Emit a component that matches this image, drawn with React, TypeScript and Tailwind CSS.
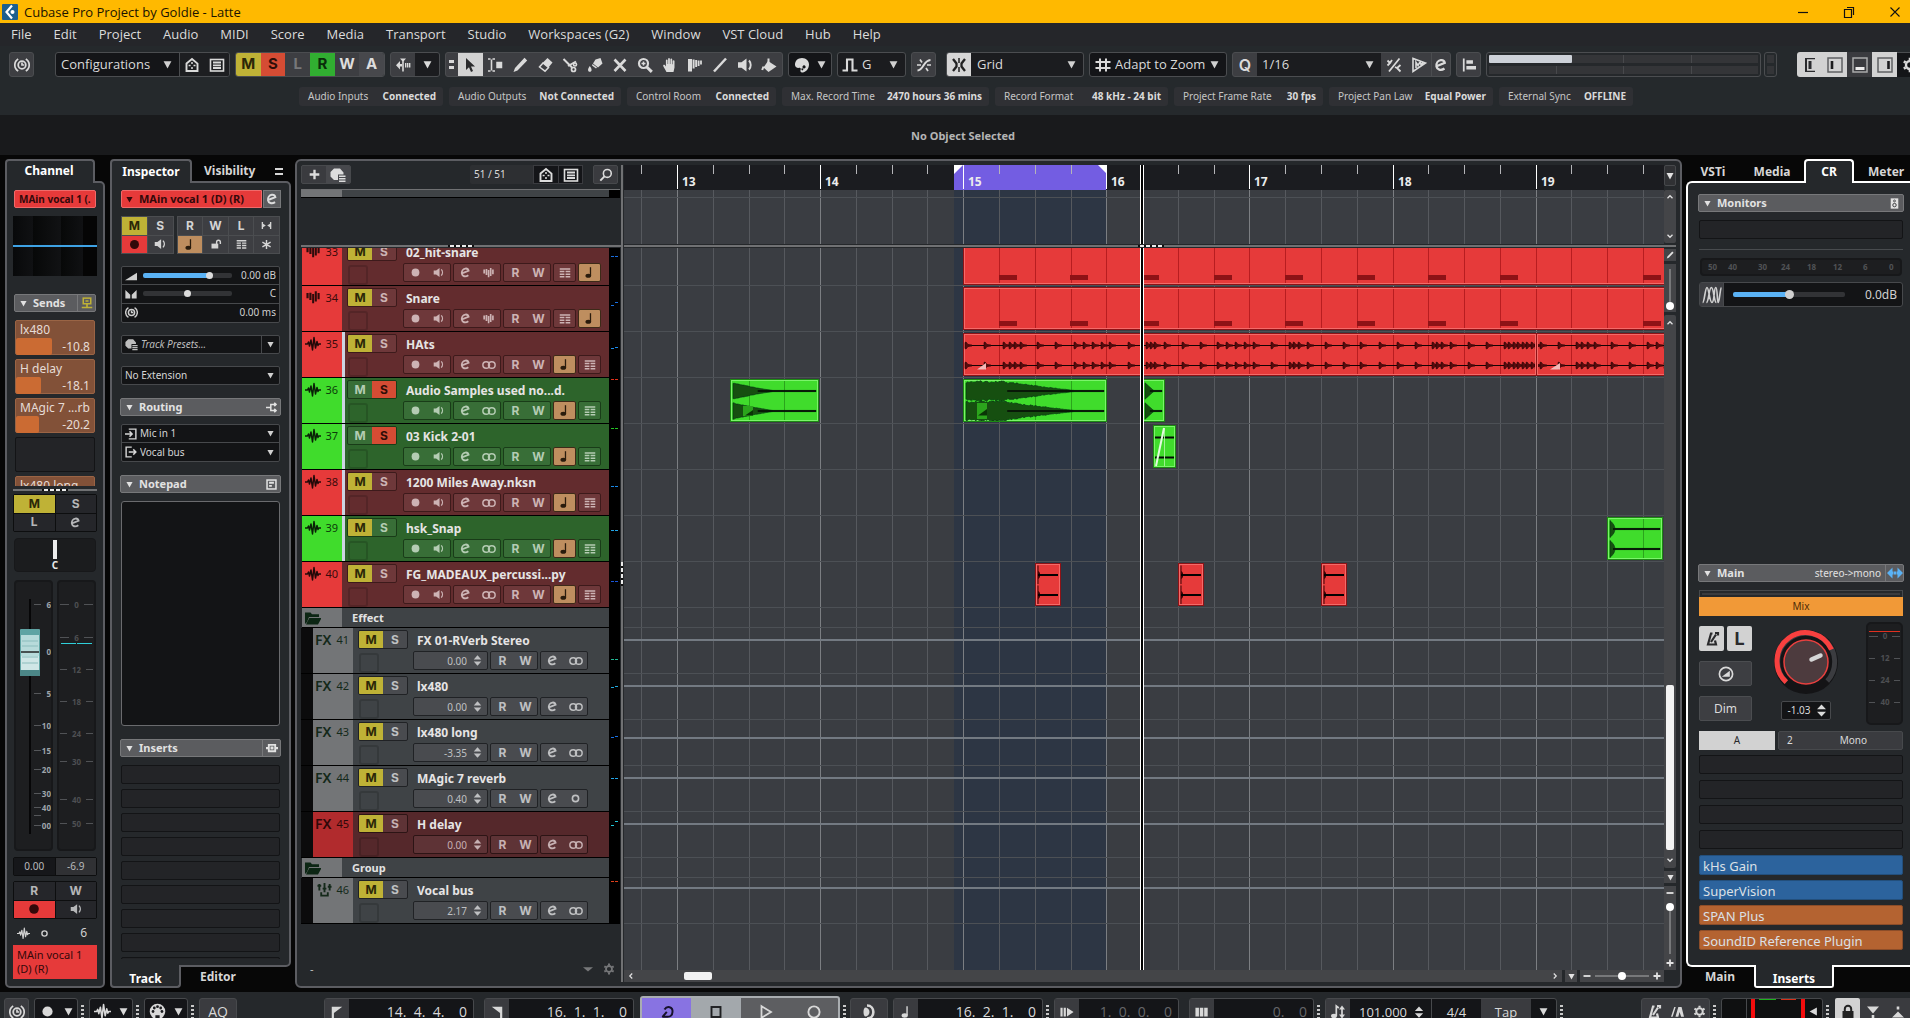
import React from "react";

/* ---------- icons ---------- */

const S = { fill: "none", stroke: "currentColor", strokeWidth: 1.5 } as const;

const glyphs: Record<string, React.ReactNode> = {
  clock: (
    <g {...S}>
      <circle cx="8" cy="8" r="3.8" strokeWidth="1.8" />
      <path d="M8 5.5V8h2.2M4.2 2a7 7 0 0 0 0 12M11.8 2a7 7 0 0 1 0 12" strokeWidth="1.7" />
    </g>
  ),
  house: (
    <g {...S}>
      <path d="M2.500 6.600 8 2l5.500 4.600V14h-11z" strokeWidth="1.900" />
      <path d="M8 5v2M8 10v2M4.600 8.600h2M9.500 8.600h2" />
    </g>
  ),
  list: (
    <g {...S}>
      <rect x="1.500" y="2.500" width="13" height="11.500" strokeWidth="1.600" />
      <path d="M4 5.500h8M4 8.300h8M4 11h8" strokeWidth="1.800" />
    </g>
  ),
  autoscroll: (
    <g fill="currentColor">
      <path d="M1 8.2 5 4v8.400zM4 7h3v2.400H4zM5 1.500h6L8 5zM7.200 3h1.600v11.500H7.200zM10 6h1.400v4.500H10zM12 6h1.400v4.500H12zM14 6h1.400v4.500H14z" />
    </g>
  ),
  pointer: <path fill="currentColor" d="M4 1v12l3-2.800L9 15l2-.9-2-4.500h4z" />,
  range: (
    <g {...S}>
      <path d="M1 2h2.500M5.500 2H8M4.500 2.500v11M1 14h2.500M5.500 14H8" strokeWidth="1.600" />
      <rect x="10" y="5.500" width="4.500" height="5" fill="currentColor" />
    </g>
  ),
  pencil: <path fill="currentColor" d="M12.500.8l2.700 2.700L5.500 13.500 1.500 15 3 11z" />,
  eraser: (
    <g>
      <path fill="currentColor" d="M10.500 1 15.500 5.500l-4 5L5.500 6z" />
      <path {...S} d="M6 6l5.500 4.500L8 14.200 2.500 10z" />
    </g>
  ),
  scissors: (
    <g {...S}>
      <path d="M1.500 2 10.500 11M14 4.500 6 9" strokeWidth="2" />
      <circle cx="11.500" cy="12.500" r="2" strokeWidth="1.700" />
      <circle cx="13" cy="7.500" r="1.500" strokeWidth="1.700" />
    </g>
  ),
  glue: (
    <g fill="currentColor">
      <path d="M8.500 2.500 13.500 1l2 5.500-4.500 4L6 6.500zM5.500 7l4.500 3.500-1 1-4-3z" />
      <path d="M2.800 9c2.600 3.200 2.200 5.800 0 5.800s-2.500-2.600 0-5.800z" />
    </g>
  ),
  x: <path d="M2.500 2.500 13.500 14M13.500 2.500 2.500 14" fill="none" stroke="currentColor" strokeWidth="2.600" />,
  zoom: (
    <g {...S}>
      <circle cx="6.500" cy="6.500" r="4.500" strokeWidth="2.200" />
      <path d="M9.800 10l5 4.800" strokeWidth="3" />
      <path d="M4.500 6.500h4M6.500 4.500v4" strokeWidth="1.500" />
    </g>
  ),
  hand: (
    <path
      fill="currentColor"
      d="M4.500 15 1.300 9.200c-.6-1.400.9-2 1.700-1l.9 1.200V3.300c0-1.100 1.700-1.100 1.700 0V7h.5V1.900c0-1.100 1.800-1.100 1.800 0V7h.5V2.200c0-1.100 1.800-1.100 1.800 0V7.300h.5V4c0-1.100 1.800-1.100 1.800 0v6.500L11.500 15z"
    />
  ),
  comb: <path fill="currentColor" d="M1 2h4v12.500H1zM5.600 2.500h2v9h-2zM8.200 3h1.900v7H8.200zM10.700 3.500h1.800v5.500h-1.800zM13.100 3.500h1.800v4h-1.800z" />,
  line: <path d="M2 14.500 14 1.500" fill="none" stroke="currentColor" strokeWidth="2.500" />,
  speaker: (
    <g>
      <path fill="currentColor" d="M1 5.200h3.500L9.500 1.500v13L4.500 10.800H1z" />
      <path {...S} d="M12 3.500c2.300 2.500 2.300 6.500 0 9" strokeWidth="1.900" />
    </g>
  ),
  paint: (
    <g>
      <path fill="currentColor" d="M7 4l8.500 5.500L7.500 15 2.500 10.500z" />
      <path {...S} d="M7.500 6V1.500M2.500 9.500l-1.300 3.500" strokeWidth="2" />
    </g>
  ),
  palette: (
    <path
      fill="currentColor"
      fillRule="evenodd"
      d="M8 1c4.400 0 7 3 7 6.500S12.500 15 8.500 15.500c-2 .2-2.500-1.500-1.800-3 .6-1.300-.8-1.800-2.200-1.600C2 11.200 1 9 1 7.500 1 3.800 4 1 8 1zM10 8.300a1.600 1.600 0 1 0 .1 0zM8.300 11.300a1 1 0 1 0 .1 0z"
    />
  ),
  pulse: <path {...S} d="M.5 13.500H5V2.500h5.500v11h5" strokeWidth="2.100" />,
  xfade: (
    <g {...S}>
      <path d="M1.500 13.500C8 13 7 3.500 14.500 3" strokeWidth="2" />
      <path d="M1 8h4M11 8h4M10 11l2 3M4 2.500l2 3" strokeWidth="1.700" />
    </g>
  ),
  snap: (
    <g {...S}>
      <path d="M8 1v5M8 10v5" strokeWidth="1.500" />
      <path d="M2 2l3.500 4.500v3L2 14M14 2l-3.500 4.500v3L14 14" strokeWidth="2.300" />
    </g>
  ),
  hash: <path {...S} d="M5 1.500v13M11 1.500v13M.5 5h15M.5 11h15" strokeWidth="2" />,
  swing: <path {...S} d="M13.500 1.500 3 14.500M1.500 3.500 4 6l-2.500 2.500M4 6l2-3M14.500 8 11 11l3.500 3.500M11 11l-2-1" strokeWidth="1.800" />,
  tri: <path {...S} d="M2 14.500V1.500L14.500 6zM5 11V5.500l2 3 2-3.500 1 2.500 2-1.500" strokeWidth="1.600" />,
  align: <path fill="currentColor" d="M1 .5h2v15H1zM5 2.500h7.500v4H5zM5 9h11v4H5z" />,
  e: <path d="M3.500 9.200l8.300-3.300C11.300 3.800 9.500 2.900 7.700 3.200 4.800 3.700 3 6.500 3.500 9.500c.5 3 4.200 4.600 8 2" fill="none" stroke="currentColor" strokeWidth="2.300" />,
  dot: <circle cx="8" cy="8" r="4.800" fill="currentColor" />,
  ring: <circle cx="8" cy="8" r="3.800" fill="none" stroke="currentColor" strokeWidth="2" />,
  rings: (
    <g fill="none" stroke="currentColor" strokeWidth="1.700">
      <circle cx="4.800" cy="8" r="3.800" />
      <circle cx="11.200" cy="8" r="3.800" />
    </g>
  ),
  note: (
    <g>
      <ellipse cx="6.500" cy="12" rx="3.500" ry="2.500" fill="currentColor" />
      <path d="M9.200 12V1.500" stroke="currentColor" strokeWidth="1.600" />
    </g>
  ),
  lanes: <path {...S} d="M1 2.500h14M1 6h6.200M8.800 6H15M1 9.500h6.200M8.800 9.500H15M1 13h6.200M8.800 13H15" strokeWidth="2" />,
  bars: <path fill="currentColor" d="M.5 3.500H3v6H.5zM3.800 3h2.500v8.500H3.800zM7 4.500h2.300V15H7zM10 1.500h2.400V13H10zM13.200 3.500h2.400v7h-2.400z" />,
  wave: <path fill="none" stroke="currentColor" strokeWidth="1.500" strokeLinejoin="round" d="M0 8h2.500l1-2 1 4 1.500-6 1.500 10L9 1.500l1.500 10.500L12 5.500l1 4 .8-1.500H16" />,
  lock: (
    <g>
      <rect x="2" y="7.500" width="9" height="6.500" fill="currentColor" />
      <path {...S} d="M8.800 8V5.500a2.500 2.500 0 0 1 5 0V8" strokeWidth="1.900" />
    </g>
  ),
  locked: (
    <g>
      <rect x="2.500" y="7" width="11" height="8" fill="currentColor" />
      <path {...S} d="M4.800 8V5a3.200 3.200 0 0 1 6.400 0v3" strokeWidth="2" />
    </g>
  ),
  bow: <path fill="currentColor" d="M1 3h2v2.500L7 8l-4 2.500V13H1zM15 3h-2v2.500L9 8l4 2.500V13h2z" />,
  star: <path {...S} d="M8 1.500v13M2 4.500l12 7M14 4.500l-12 7" strokeWidth="2.100" />,
  vol: <path fill="currentColor" d="M0 13.500 16 3.500v10z" />,
  pan: <path fill="currentColor" d="M.5 2.500 7 9v5H.5zM15.500 2.500 9 9v5h6.500z" />,
  preset: (
    <g fill="currentColor">
      <path d="M4 1.500h6l3.500 4v2H8V13H4L.5 9.500V5z" />
      <path d="M9 8.500h6.500V10H9zM9 11h6.500v1.500H9zM9 13.500h6.500V15H9z" />
    </g>
  ),
  routing: <path {...S} d="M0 8h6M14.500 3.500H7v9h7.500M12 1l2.500 2.500L12 6M12 10l2.500 2.500L12 15" strokeWidth="2.200" />,
  pad: (
    <g {...S}>
      <rect x="1.500" y="1.500" width="13" height="13" strokeWidth="2.200" />
      <path d="M4.500 5.500h7M4.500 10h4" strokeWidth="2.800" />
    </g>
  ),
  ins: (
    <g fill="currentColor">
      <path fillRule="evenodd" d="M2.500 2.500h11v11h-11zM5 5v6h6V5zM6 6h4v4H6z" />
      <path d="M0 6.500h3v3H0zM13 6.500h3v3h-3z" />
    </g>
  ),
  net: (
    <g {...S}>
      <rect x="3" y="1.500" width="10" height="7.500" strokeWidth="2" />
      <path d="M6 5.300h4M8 9v4.500M1 14h14" strokeWidth="2.200" />
    </g>
  ),
  inp: <path {...S} d="M5 1.500h9.500v13H5M0 8h9M6 4.500 9.500 8 6 11.500" strokeWidth="1.900" />,
  out: <path {...S} d="M9 1.500H1.500v13H9M5 8h9.500M11 4.500 14.500 8 11 11.500" strokeWidth="1.900" />,
  search: (
    <g {...S}>
      <circle cx="9.500" cy="6.200" r="4.500" strokeWidth="1.800" />
      <path d="M6.500 9.300 1.500 14.500" strokeWidth="2.200" />
    </g>
  ),
  plus: <path {...S} d="M8 1v14M1 8h14" strokeWidth="3.400" />,
  plusS: <path {...S} d="M8 1v14M1 8h14" strokeWidth="3.600" />,
  minus: <path {...S} d="M1 8h14" strokeWidth="3.600" />,
  folder: <path fill="currentColor" d="M0 2.500h5.500L7 4.200h7V7H4L2 12l-2 2zM4.300 8H16.500L13 14.500H1z" />,
  group: <path {...S} d="M2.500 2v7M8 1v10M13.500 2v7M4.500 11v3.500h7V11M.5 4h4M6 7h4M11.500 5h4" strokeWidth="2" />,
  gear: (
    <g {...S}>
      <circle cx="8" cy="8" r="4" strokeWidth="2.400" />
      <path d="M8 .8V3M8 13v2.200M1.800 4.400l1.900 1.100M12.300 10.500l1.900 1.100M1.800 11.600l1.900-1.100M12.300 5.500l1.900-1.100" strokeWidth="2.600" />
    </g>
  ),
  up: <path {...S} d="M3 10.500 8 5.500l5 5" strokeWidth="2.600" />,
  down: <path {...S} d="M3 5.500l5 5 5-5" strokeWidth="2.600" />,
  left: <path {...S} d="M10.500 3 5.500 8l5 5" strokeWidth="2.400" />,
  right: <path {...S} d="M5.500 3l5 5-5 5" strokeWidth="2.400" />,
  caret: <path fill="currentColor" d="M1 2h14L8 15z" />,
  caretW: <path fill="currentColor" d="M0 5h16l-8 7z" />,
  caretL: <path fill="currentColor" d="M14 1v14L1 8z" />,
  spin: <path fill="currentColor" d="M2.500 6.500 8 .5l5.500 6zM2.500 9.500h11L8 15.500z" />,
  monitor: (
    <g>
      <rect x="2.500" y=".5" width="11" height="15" fill="currentColor" />
      <circle cx="8" cy="10.300" r="2.500" fill="none" stroke="#3a3b3e" strokeWidth="1.400" />
      <circle cx="8" cy="4.300" r="1.400" fill="none" stroke="#3a3b3e" strokeWidth="1.200" />
    </g>
  ),
  stereo: <path fill="currentColor" d="M0 8l5.500-5.500v4h1v3h-1v4zM16 8l-5.500-5.500v4h-1v3h1v4zM7 6.500h2v3H7z" />,
  osc: <path {...S} d="M.5 14C2 14 2.500 2 4 2s2 12 4 12S9.500 2 11 2s1 12 2 12 1.500-12 2.500-12M3.500 14C5.500 14 5.500 2 7.500 2s2 12 4 12" strokeWidth="1.300" />,
  metro: <path fill="none" stroke="currentColor" strokeWidth="2.200" d="M8.500 2.500h-1.500L4 13.500h8L11 9.500M7 11l5-7.500M11 2h3v2.500" />,
  precount: <path fill="currentColor" d="M0 14.500 4 2.500h1.800L2 14.500zM5.500 14.500l3.500-12h4l3 12h-3.500l-2-6-1.500 6z" />,
  mixvol: (
    <g>
      <circle cx="8" cy="8" r="6.600" fill="none" stroke="currentColor" strokeWidth="1.700" />
      <path fill="currentColor" d="M3.800 10.800 11.800 4.800v6z" />
    </g>
  ),
  cycle: <path fill="none" stroke="currentColor" strokeWidth="2" strokeLinejoin="bevel" d="M5.500 5.500C8 1.500 14 2.500 13.500 8c-.3 3.500-2.500 4.800-5 4.800H3.500L7.800 7.800" />,
  stop: <rect x="3.500" y="3" width="9" height="10" fill="none" stroke="currentColor" strokeWidth="1.900" />,
  play: <path fill="none" stroke="currentColor" strokeWidth="1.800" d="M3.500 2.200v11.600L13 8z" />,
  rec: <circle cx="8" cy="8" r="5.600" fill="none" stroke="currentColor" strokeWidth="1.900" />,
  punch: (
    <g>
      <path fill="currentColor" d="M4 3.500a4.500 4.500 0 0 1 0 9C2 11 2 5 4 3.500z" />
      <path {...S} d="M6 1.500c8.500 0 8.500 13 0 13" strokeWidth="2.600" />
    </g>
  ),
  flagL: <path fill="currentColor" d="M2 2h12L4.500 9v6H2z" />,
  flagR: <path fill="currentColor" d="M14 2H2l9.500 7v6H14z" />,
  pre: <path fill="currentColor" d="M.5 3h2.500v10H.5zM4.200 3h2.500v10H4.200zM8 3l7.500 5L8 13z" />,
  post: <path fill="currentColor" d="M.5 3h4v10h-4zM5.500 3h4v10h-4zM10.500 3h4v10h-4z" />,
  tempo: (
    <g>
      <ellipse cx="4" cy="12" rx="3" ry="2.200" fill="currentColor" />
      <path d="M6.300 12V2l2.500 2M12 4v8" stroke="currentColor" strokeWidth="1.700" fill="none" />
      <path fill="currentColor" d="M9 5.500 12 1.500l3 4zM9 10.500 12 14.500l3-4z" />
    </g>
  ),
  midi: (
    <g>
      <circle cx="8" cy="8" r="7.300" fill="currentColor" />
      <g fill="#1b1c1f">
        <circle cx="3.800" cy="8" r="1.300" />
        <circle cx="5" cy="4.700" r="1.300" />
        <circle cx="8" cy="3.500" r="1.300" />
        <circle cx="11" cy="4.700" r="1.300" />
        <circle cx="12.200" cy="8" r="1.300" />
        <path d="M6 11.500h4V15H6z" />
      </g>
    </g>
  ),
  panelL: <path fill="#2a2b2e" d="M3 1h10v1.300H5v11.400h8V15H3zM6.500 4h3v8h-3z" />,
  panelLf: (
    <g fill="none" stroke="#5f6063" strokeWidth="1.500">
      <rect x="1" y="1" width="14" height="14" />
      <path d="M5 4v8" stroke="#1c1c1e" strokeWidth="2.600" />
    </g>
  ),
  panelB: (
    <g fill="none" stroke="#a9aaab" strokeWidth="1.500">
      <rect x="1" y="1" width="14" height="14" />
      <path d="M3.500 11.500h9" stroke="#ececec" strokeWidth="2.800" />
    </g>
  ),
  panelR: (
    <g fill="none" stroke="#5f6063" strokeWidth="1.500">
      <rect x="1" y="1" width="14" height="14" />
      <path d="M11.500 4v8" stroke="#1c1c1e" strokeWidth="2.600" />
    </g>
  ),
  mute1: <path fill="currentColor" d="M2 2.500h12L8 9.500zM6.700 11h2.600v3H6.700z" />,
  mute2: <path fill="currentColor" d="M2 13.500h12L8 7.500zM6.700 2.500h2.600v3H6.700z" />,
};

const Icon = ({ n, c = "size-4" }: { n: string; c?: string }) => (
  <svg viewBox="0 0 16 16" className={`shrink-0 ${c}`} aria-hidden="true">
    {glyphs[n]}
  </svg>
);

/* ---------- shared pieces ---------- */

const Btn = ({ n, w = "w-[25px]", label, c = "", ic }: { n: string; w?: string; label: string; c?: string; ic?: string }) => (
  <button aria-label={label} className={`flex items-center justify-center ${w} ${c}`}>
    <Icon n={n} c={ic} />
  </button>
);

const box = "flex h-[25px] shrink-0 overflow-hidden rounded-[3px] border border-[#4b4d50]";
const Caret = ({ c = "size-[9px] text-[#d0d0d0]" }: { c?: string }) => <Icon n="caret" c={`pointer-events-none ${c}`} />;

const Select = ({ value, label, c = "" }: { value: string; label: string; c?: string }) => (
  <select aria-label={label} className={`min-w-0 flex-1 appearance-none bg-transparent outline-none ${c}`} defaultValue={value}>
    <option>{value}</option>
  </select>
);

const Header = ({ title, children }: { title: string; children?: React.ReactNode }) => (
  <div className="flex h-[18px] shrink-0 items-stretch rounded-[2px] border border-[#77787a] bg-[#5b5c5f] text-[#e2e2e2]">
    <button className="flex flex-1 items-center gap-[6px] pl-[5px] text-[11px] leading-4 font-bold">
      <Icon n="caret" c="size-[7px]" />
      {title}
    </button>
    {children}
  </div>
);

const Dots = () => (
  <span className="mx-[3px] flex w-[3px] shrink-0 flex-col gap-[2px] pt-[7px]">
    <i className="h-[2px] bg-[#c9c9c9]" />
    <i className="h-[2px] bg-[#c9c9c9]" />
    <i className="h-[2px] bg-[#c9c9c9]" />
    <i className="h-[2px] bg-[#c9c9c9]" />
  </span>
);

const Dashes = () => (
  <span className="flex gap-[2px] bg-[#111] px-[2px]">
    {[0, 1, 2, 3].map((i) => (
      <i key={i} className="h-[2px] w-1 bg-[#ececec]" />
    ))}
  </span>
);

/* ---------- top bars ---------- */

const menus = ["File", "Edit", "Project", "Audio", "MIDI", "Score", "Media", "Transport", "Studio", "Workspaces (G2)", "Window", "VST Cloud", "Hub", "Help"];

const TitleBar = () => (
  <header className="flex h-[23px] shrink-0 items-center bg-[#ffb900] pl-[2px] font-['Open_Sans',sans-serif] text-[13px] leading-5 text-[#1a1300]">
    <svg viewBox="0 0 16 16" className="size-4">
      <rect width="16" height="16" rx="1" fill="#1d5f8e" />
      <path d="M10 1.500 4.500 8l5.500 6.500" fill="none" stroke="#fff" strokeWidth="2.200" />
      <circle cx="10.500" cy="8" r="2" fill="#fff" />
    </svg>
    <h1 className="ml-[6px] flex-1">Cubase Pro Project by Goldie - Latte</h1>
    <div className="flex gap-[34px] pr-[9px]">
      <button aria-label="Minimize">
        <svg viewBox="0 0 12 12" className="size-3"><path d="M1 6.500h10" stroke="#111" strokeWidth="1.200" /></svg>
      </button>
      <button aria-label="Restore">
        <svg viewBox="0 0 12 12" className="size-3">
          <path d="M1.500 3.500h7v8h-7zM4 1.500h6.500V9" fill="none" stroke="#111" strokeWidth="1.200" />
        </svg>
      </button>
      <button aria-label="Close">
        <svg viewBox="0 0 12 12" className="size-3"><path d="M1.500 1.500l9 9M10.500 1.500l-9 9" stroke="#111" strokeWidth="1.100" /></svg>
      </button>
    </div>
  </header>
);

const MenuBar = () => (
  <nav className="flex h-[23px] shrink-0 items-center gap-[22px] bg-[#25262a] pb-[2px] pl-[11px] font-['Open_Sans',sans-serif] text-[13px] leading-5 text-[#dcdcdc]">
    {menus.map((m) => (
      <button key={m} className="whitespace-nowrap">{m}</button>
    ))}
  </nav>
);

const states = [
  ["M", "bg-[#bfb236] text-[#2b2708]"],
  ["S", "bg-[#d54c34] text-[#2e0e08]"],
  ["L", "bg-[#3d3e42] text-[#77787a]"],
  ["R", "bg-[#31ae31] text-[#0a2c0a]"],
  ["W", "bg-[#3d3e42] text-[#dddddd]"],
  ["A", "bg-[#47484c] text-[#dddddd]"],
];

const tools = ["range", "pencil", "eraser", "scissors", "glue", "x", "zoom", "hand", "comb", "line", "speaker", "paint"];

const Toolbar = () => (
  <div className="-mr-3 flex h-[31px] shrink-0 items-start pl-[9px] pt-[6px] font-['Open_Sans',sans-serif] text-[13px] text-[#dadada]">
    <div className={`${box} bg-[#3d3e42]`}><Btn n="clock" label="Constrain delay" w="w-[23px]" /></div>
    <div className={`${box} ml-[21px] w-[175px] bg-[#141518]`}>
      <div className="flex flex-1 items-center pl-[5px] pr-[7px]">
        <Select value="Configurations" label="Configurations" />
        <Caret />
      </div>
      <Btn n="house" label="Visibility" c="border-l border-[#4b4d50] bg-[#1d1e21]" />
      <Btn n="list" label="Track filter" c="bg-[#1d1e21]" />
    </div>
    <div className={`${box} ml-[5px] w-[150px] font-['Inter',sans-serif] text-[15px] font-bold`}>
      {states.map(([l, c]) => (
        <button key={l} className={`flex-1 ${c}`}>{l}</button>
      ))}
    </div>
    <div className={`${box} ml-[5px] w-[50px] bg-[#3d3e42]`}>
      <Btn n="autoscroll" label="Auto-scroll" />
      <Btn n="caret" label="Auto-scroll settings" ic="size-[9px]" c="bg-[#1b1c1f]" />
    </div>
    <div className={`${box} ml-[5px] w-[338px] bg-[#3d3e42]`}>
      <span className="flex w-[12px] flex-col items-center justify-center gap-[3px]">
        <i className="h-[3px] w-[5px] bg-[#d8d8d8]" />
        <i className="h-[3px] w-[5px] bg-[#d8d8d8]" />
      </span>
      <Btn n="pointer" label="Object selection" c="bg-[#d2d2d2] text-[#2a2a2c]" />
      {tools.map((t) => <Btn key={t} n={t} label={t} />)}
    </div>
    <div className={`${box} ml-[5px] w-[44px] items-center justify-center gap-[7px] bg-[#141518]`}>
      <Icon n="palette" />
      <Caret />
    </div>
    <div className={`${box} ml-[5px] w-[69px] items-center bg-[#1b1c1f] pl-1 pr-[7px]`}>
      <Icon n="pulse" />
      <Select value="G" label="Nudge" c="pl-1" />
      <Caret />
    </div>
    <div className={`${box} ml-[5px] bg-[#3d3e42]`}><Btn n="xfade" label="Snap to zero crossing" w="w-[23px]" /></div>
    <div className={`${box} ml-[10px] w-[138px] bg-[#1b1c1f]`}>
      <Btn n="snap" label="Snap" w="w-[24px]" c="bg-[#d6d6d6] text-[#222]" />
      <div className="flex flex-1 items-center pl-[6px] pr-[7px]">
        <Select value="Grid" label="Snap type" />
        <Caret />
      </div>
    </div>
    <div className={`${box} ml-[5px] w-[138px] items-center bg-[#141518] pl-[5px] pr-[7px]`}>
      <Icon n="hash" />
      <Select value="Adapt to Zoom" label="Grid type" c="pl-1" />
      <Caret />
    </div>
    <div className={`${box} ml-[5px] w-[219px] bg-[#3d3e42]`}>
      <button className="w-[24px] font-['Inter',sans-serif] text-[16px] font-semibold">Q</button>
      <div className="flex flex-1 items-center bg-[#1b1c1f] pl-[5px] pr-[7px]">
        <Select value="1/16" label="Quantize preset" />
        <Caret />
      </div>
      <Btn n="swing" label="Iterative quantize" />
      <Btn n="tri" label="Audiowarp quantize" />
      <Btn n="e" label="Quantize panel" w="w-[19px]" c="border-l border-[#4b4d50]" />
    </div>
    <div className={`${box} ml-[5px] bg-[#3d3e42]`}><Btn n="align" label="Align" w="w-[23px]" ic="size-[14px]" /></div>
    <div className="ml-[5px] grid h-[25px] min-w-0 flex-1 gap-[3px] rounded-[3px] border border-[#4b4d50] bg-[#25282b] p-[2px]">
      {[true, false].map((on, i) => (
        <div key={i} className="relative grid grid-cols-4 gap-px bg-[#48494c]">
          {[0, 1, 2, 3].map((k) => <i key={k} className="bg-[#343538]" />)}
          {on && <i className="absolute inset-y-0 left-0 w-[31%] rounded-[1px] bg-[#cdd1d8]" />}
        </div>
      ))}
    </div>
    <div className="ml-[3px] grid h-[25px] w-[13px] gap-[3px] rounded-[3px] border border-[#4b4d50] p-[2px]">
      <i className="bg-[#343538]" />
      <i className="bg-[#343538]" />
    </div>
    <div className="ml-[20px] flex h-[25px] shrink-0 overflow-hidden rounded-l-[3px] bg-[#d2d2d2]">
      <Btn n="panelL" label="Left outer zone" />
      <Btn n="panelLf" label="Left zone" />
      <Btn n="panelB" label="Lower zone" c="bg-[#3a3b3f]" />
      <Btn n="panelR" label="Right zone" />
      <Btn n="gear" label="Window layout" c="border-t border-[#4b4d50] bg-[#141518]" />
    </div>
  </div>
);

const status = [
  ["Audio Inputs", "Connected", "w-[144px]"],
  ["Audio Outputs", "Not Connected", "w-[172px]"],
  ["Control Room", "Connected", "w-[149px]"],
  ["Max. Record Time", "2470 hours 36 mins", "w-[207px]"],
  ["Record Format", "48 kHz - 24 bit", "w-[173px]"],
  ["Project Frame Rate", "30 fps", "w-[149px]"],
  ["Project Pan Law", "Equal Power", "w-[164px]"],
  ["External Sync", "OFFLINE", "w-[134px]"],
];

const StatusLine = () => (
  <div className="flex h-[38px] shrink-0 items-start justify-center gap-[6px] pl-[22px] pt-[10px] text-[10px] leading-[19px] text-[#c6c6c6]">
    {status.map(([k, v, w]) => (
      <div key={k} className={`flex justify-between whitespace-nowrap rounded-[3px] bg-[#2f3034] pr-[7px] pl-[9px] ${w}`}>
        <span>{k}</span>
        <b className="text-[#dadada]">{v}</b>
      </div>
    ))}
  </div>
);

/* ---------- channel ---------- */

const sends = [
  ["lx480", "-10.8", "w-[36px]"],
  ["H delay", "-18.1", "w-[25px]"],
  ["MAgic 7 ...rb", "-20.2", "w-[23px]"],
];

const faderMarks: [number, string][] = [[25, "6"], [72, "0"], [114, "5"], [146, "10"], [171, "15"], [190, "20"], [214, "30"], [228, "40"], [236, ""], [246, "00"]];
const meterMarks: [number, string][] = [[25, "0"], [58, "6"], [90, "12"], [122, "18"], [154, "24"], [182, "30"], [220, "40"], [244, "50"]];

const cell = "flex items-center justify-center";

const Channel = () => (
  <section className="flex w-[100px] shrink-0 flex-col">
    <h2 className="z-10 -mb-[2px] h-[24px] w-[90px] rounded-t-[4px] border-2 border-b-0 border-[#5c5d62] bg-[#25282b] pr-[2px] text-center text-[12px] leading-5 font-bold text-white">Channel</h2>
    <div className="flex min-h-0 flex-1 flex-col rounded-b-[5px] rounded-tr-[5px] border-2 border-[#5c5d62] bg-[#25282b] px-[6px] pt-[7px] pb-[7px]">
      <button className="mx-px h-[18px] shrink-0 overflow-hidden rounded-[2px] border border-[#f06a6a] bg-[#e63a3a] pl-1 text-left text-[10px] leading-4 font-bold whitespace-nowrap text-[#33090a]">MAin vocal 1 (.</button>
      <div className="mt-2 flex h-[60px] shrink-0 items-center bg-[linear-gradient(90deg,#08090a_0,#101113_24%,#070808_24%,#111214_57%,#070808_57%,#101113_83%,#050505_83%)]">
        <i className="h-[2px] flex-1 bg-[#3ea2e4]" />
      </div>
      <div className="mx-px mt-[18px]">
        <Header title="Sends">
          <button aria-label="Send routing" className="flex w-[18px] items-center justify-center border-l border-[#77787a] text-[#bfb236]"><Icon n="net" c="size-[12px]" /></button>
        </Header>
      </div>
      <div className="mx-[2px] mt-2 flex h-[166px] shrink-0 flex-col gap-1 overflow-hidden text-[12px] leading-[17px] text-[#e6dcd6]">
        {sends.map(([n, v, w]) => (
          <div key={n} className="flex h-[35px] shrink-0 flex-col rounded-[2px] border border-[#9a6445] bg-[#825138]">
            <span className="h-[18px] pl-1 whitespace-nowrap">{n}</span>
            <span className="flex flex-1 justify-between pr-1"><i className={`rounded-[2px] bg-[#cb6b33] ${w}`} />{v}</span>
          </div>
        ))}
        <div className="h-[35px] shrink-0 rounded-[2px] border border-[#131416] bg-[#232427]" />
        <div className="h-[35px] shrink-0 rounded-[2px] border border-[#9a6445] bg-[#825138] pl-1">lx480 long</div>
      </div>
      <div className="mt-[3px] flex h-[2px] shrink-0 justify-center bg-[#707173]"><Dashes /></div>
      <div className="mt-[3px] grid h-[38px] shrink-0 grid-cols-2 gap-px rounded-[2px] border border-[#0d0e0f] bg-[#0d0e0f] font-['Inter',sans-serif] text-[12px] leading-4 font-bold text-[#b5b6b8]">
        <button className="bg-[#bfb236] text-[#2b2708]">M</button>
        <button className="bg-[#25262a]">S</button>
        <button className="bg-[#25262a]">L</button>
        <button aria-label="Edit channel" className={`${cell} bg-[#25262a]`}><Icon n="e" c="size-[13px]" /></button>
      </div>
      <div className="mx-px mt-[6px] flex h-[34px] shrink-0 flex-col items-center rounded-[4px] border border-[#17181a] bg-[#1b1c1e] pt-px text-[10px] leading-[12px] font-bold text-[#e8e8e8]">
        <i className="h-[19px] w-1 bg-[#ececec]" />C
      </div>
      <div className="mx-px mt-2 flex min-h-0 flex-1 gap-1">
        <div className="relative flex-1 rounded-[4px] border-2 border-[#17181a] bg-[#1d1e20]">
          <svg viewBox="0 0 35 267" className="w-full">
            <path d="M14 17v235" stroke="#060607" strokeWidth="2" />
            {faderMarks.map(([y, t]) => (
              <g key={y}>
                {t !== "0" && <path d={`M18 ${y - 2.5}h7`} stroke="#55575a" />}
                <text x="35" y={y + 1} textAnchor="end" className="fill-[#9fa4aa] text-[8px] font-bold">{t}</text>
              </g>
            ))}
            <g>
              <rect x="4" y="47" width="20" height="47" rx="1" fill="#5fa3a3" />
              <rect x="5" y="53" width="18" height="35" fill="#b7dada" />
              <rect x="5" y="74" width="18" height="14" fill="#cfe6e6" />
              <path d="M6 59h16M6 64h16M6 75h16M6 81h16" stroke="#8bbcbc" />
              <path d="M5 70h18" stroke="#222" strokeWidth="1.500" />
              <rect x="4" y="88" width="20" height="6" fill="#4c8788" />
            </g>
          </svg>
          <input type="range" aria-label="Channel volume" className="absolute inset-0 h-full w-full opacity-0" />
        </div>
        <div className="flex-1 rounded-[4px] border-2 border-[#17181a] bg-[#1d1e20]">
          <svg viewBox="0 0 35 267" className="w-full">
            {meterMarks.map(([y, t]) => (
              <g key={y}>
                <path d={`M1 ${y - 2.5}h${t.length > 1 ? 7 : 9}M${t.length > 1 ? 27 : 25} ${y - 2.5}h${t.length > 1 ? 7 : 9}`} stroke="#505255" />
                <text x="17.500" y={y + 1} textAnchor="middle" className="fill-[#4d4f52] text-[8px] font-bold">{t}</text>
              </g>
            ))}
            <path d="M2 61.500h15M18 61.500h15" stroke="#2fd0da" />
          </svg>
        </div>
      </div>
      <div className="mt-[6px] grid h-[19px] shrink-0 grid-cols-2 gap-px rounded-[2px] border border-[#0d0e0f] bg-[#0d0e0f] text-[10px] leading-[17px] text-[#b9babc]">
        <input aria-label="Volume" defaultValue="0.00" className="w-full bg-[#16171a] text-center" />
        <output className="bg-[#303134] text-center">-6.9</output>
      </div>
      <div className="mt-[5px] grid h-[38px] shrink-0 grid-cols-2 gap-px rounded-[2px] border border-[#0d0e0f] bg-[#0d0e0f] font-['Inter',sans-serif] text-[12px] leading-4 font-bold text-[#b5b6b8]">
        <button className="bg-[#25262a]">R</button>
        <button className="bg-[#25262a]">W</button>
        <button aria-label="Record enable" className={`${cell} bg-[#e63a3a] text-[#33090a]`}><Icon n="dot" /></button>
        <button aria-label="Monitor" className={`${cell} bg-[#25262a]`}><Icon n="speaker" c="size-[12px]" /></button>
      </div>
      <div className="flex h-[26px] shrink-0 items-center px-1 pt-[2px] text-[12px] text-[#d0d0d0]">
        <Icon n="wave" c="size-[13px]" />
        <Icon n="ring" c="ml-[9px] size-[11px]" />
        <span className="ml-auto pr-[6px]">6</span>
      </div>
      <button className="h-[34px] shrink-0 bg-[#e63a3a] pl-1 text-left text-[11px] leading-[14px] text-[#33090a]">MAin vocal 1<br />(D) (R)</button>
    </div>
  </section>
);

/* ---------- inspector ---------- */

const field = "flex shrink-0 items-center border-[#47494c] bg-[#131416]";
const slots8 = [0, 1, 2, 3, 4, 5, 6, 7, 8];
const slider =
  "h-[5px] appearance-none rounded-[2px] [&::-webkit-slider-thumb]:size-[7px] [&::-webkit-slider-thumb]:appearance-none [&::-webkit-slider-thumb]:rounded-full [&::-webkit-slider-thumb]:bg-[#dcdcdc]";

const Inspector = () => (
  <section className="ml-[5px] flex w-[181px] shrink-0 flex-col">
    <div className="z-10 -mb-[2px] flex h-[24px] shrink-0 items-start text-[12px] leading-5 font-bold">
      <button className="h-[24px] w-[82px] rounded-t-[4px] border-2 border-b-0 border-[#5c5d62] bg-[#25282b] leading-5 text-white">Inspector</button>
      <button className="ml-[12px] pt-[2px] text-[#d6d6d6]">Visibility</button>
      <button aria-label="Inspector setup" className="mr-2 ml-auto flex flex-col gap-[3px] pt-[9px]">
        <i className="h-[2px] w-2 bg-[#d6d6d6]" />
        <i className="h-[2px] w-2 bg-[#d6d6d6]" />
      </button>
    </div>
    <div className="flex min-h-0 flex-1 flex-col rounded-tr-[5px] rounded-br-[5px] border-2 border-[#5c5d62] bg-[#25282b] px-[8px] pt-[7px] pb-[6px]">
      <div className="flex h-[18px] shrink-0 gap-px pl-px">
        <button className="flex flex-1 items-center gap-[6px] rounded-l-[2px] border border-[#f06a6a] bg-[#e63a3a] pl-1 text-[11px] leading-4 font-bold whitespace-nowrap text-[#33090a]"><Icon n="caret" c="size-[7px]" />MAin vocal 1 (D) (R)</button>
        <button aria-label="Edit channel settings" className={`${cell} w-[18px] border border-[#77787a] bg-[#5b5c5f] text-[#dcdcdc]`}><Icon n="e" c="size-[14px]" /></button>
      </div>
      <div className="mx-px mt-2 flex h-[38px] shrink-0 gap-[3px] font-['Inter',sans-serif] text-[12px] leading-4 font-bold text-[#d4d4d4]">
        <div className="grid flex-1 grid-cols-2 grid-rows-2 gap-px bg-[#4b4d50] p-px">
          <button className="bg-[#bfb236] text-[#2b2708]">M</button>
          <button className="bg-[#3d3e42]">S</button>
          <Btn n="dot" label="Record enable" w="w-full" ic="size-[15px]" c="bg-[#e63a3a] text-[#33090a]" />
          <Btn n="speaker" label="Monitor" w="w-full" ic="size-[12px]" c="bg-[#3d3e42]" />
        </div>
        <div className="grid flex-2 grid-cols-4 grid-rows-2 gap-px bg-[#4b4d50] p-px">
          <button className="bg-[#3d3e42]">R</button>
          <button className="bg-[#3d3e42]">W</button>
          <button className="bg-[#3d3e42]">L</button>
          <Btn n="bow" label="Freeze" w="w-full" ic="size-[11px]" c="bg-[#3d3e42]" />
          <Btn n="note" label="Timebase" w="w-full" ic="size-[13px]" c="bg-[#be8e5f] text-[#2a1c0d]" />
          <Btn n="lock" label="Lock" w="w-full" ic="size-[12px]" c="bg-[#3d3e42]" />
          <Btn n="lanes" label="Lanes" w="w-full" ic="size-[11px]" c="bg-[#3d3e42]" />
          <Btn n="star" label="Freeze channel" w="w-full" ic="size-[11px]" c="bg-[#3d3e42]" />
        </div>
      </div>
      <div className="mx-px mt-3 grid h-[57px] shrink-0 grid-rows-3 divide-y divide-[#47494c] rounded-[2px] border border-[#47494c] bg-[#131416] text-[10px] text-[#cfcfcf]">
        <label className="flex items-center pr-[3px] pl-[3px]"><Icon n="vol" c="size-[12px]" />
          <input type="range" aria-label="Volume" min="0" max="100" defaultValue="77" className={`${slider} ml-[6px] w-[89px] bg-[linear-gradient(90deg,#5ab2f5_77%,#323336_77%)]`} />
          <span className="ml-auto">0.00 dB</span></label>
        <label className="flex items-center pr-[3px] pl-[3px]"><Icon n="pan" c="size-[12px]" />
          <input type="range" aria-label="Pan" min="0" max="100" defaultValue="50" className={`${slider} ml-[6px] w-[89px] bg-[#323336]`} />
          <span className="ml-auto">C</span></label>
        <div className="flex items-center pr-[3px] pl-[3px]"><Icon n="clock" c="size-[13px]" /><span className="ml-auto">0.00 ms</span></div>
      </div>
      <div className={`${field} mx-px mt-3 h-[19px] rounded-[2px] border pl-[3px] text-[10px] text-[#bdbdbd]`}>
        <Icon n="preset" c="size-[13px]" />
        <Select value="Track Presets..." label="Track Presets" c="pl-[3px] italic" />
        <span className={`${cell} h-full w-[18px] border-l border-[#47494c]`}><Caret c="size-[7px] text-[#d0d0d0]" /></span>
      </div>
      <div className={`${field} mx-px mt-3 h-[19px] rounded-[2px] border pr-[5px] pl-[3px] text-[10px] text-[#d6d6d6]`}>
        <Select value="No Extension" label="Extension" /><Caret c="size-[7px] text-[#d0d0d0]" />
      </div>
      <div className="mt-[13px]"><Header title="Routing"><span className="flex items-center pr-[3px]"><Icon n="routing" c="size-[11px]" /></span></Header></div>
      <div className="mx-px mt-2 grid h-[38px] shrink-0 grid-rows-2 divide-y divide-[#47494c] rounded-[2px] border border-[#47494c] bg-[#131416] text-[10px] text-[#d6d6d6]">
        <div className="flex items-center pr-[5px] pl-[3px]"><Icon n="inp" c="size-[12px]" /><Select value="Mic in 1" label="Input routing" c="pl-[3px]" /><Caret c="size-[7px] text-[#d0d0d0]" /></div>
        <div className="flex items-center pr-[5px] pl-[3px]"><Icon n="out" c="size-[12px]" /><Select value="Vocal bus" label="Output routing" c="pl-[3px]" /><Caret c="size-[7px] text-[#d0d0d0]" /></div>
      </div>
      <div className="mt-[13px]"><Header title="Notepad"><span className="flex items-center pr-[3px]"><Icon n="pad" c="size-[11px]" /></span></Header></div>
      <textarea aria-label="Notepad" className="mx-px mt-2 min-h-0 flex-1 resize-none rounded-[3px] border border-[#6a6b6e] bg-[#131416]" />
      <div className="mt-[13px]"><Header title="Inserts"><span className={`${cell} w-[18px] border-l border-[#77787a]`}><Icon n="ins" c="size-[12px]" /></span></Header></div>
      <div className="mx-px mt-2 flex h-[194px] shrink-0 flex-col gap-[5px] overflow-hidden">
        {slots8.map((i) => <button key={i} aria-label={`Insert ${i + 1}`} className="h-[19px] shrink-0 rounded-[2px] border border-[#131416] bg-[#232427]" />)}
      </div>
    </div>
    <div className="z-10 -mt-[2px] flex h-[23px] shrink-0 text-[12px] leading-6 font-bold">
      <button className="w-[71px] rounded-b-[4px] border-2 border-t-0 border-[#5c5d62] bg-[#25282b] pt-[2px] text-white">Track</button>
      <button className="pl-[19px]  text-[#d6d6d6]">Editor</button>
    </div>
  </section>
);

/* ---------- tracks ---------- */

type Tone = "red" | "green" | "gray" | "dark";
const tones: Record<Tone, { block: string; row: string; btn: string; txt: string }> = {
  red: { block: "bg-[#e63a3a] text-[#3a0a0b]", row: "bg-[#632c2e]", btn: "border-[#3d1a1b] bg-[#6e383a]", txt: "text-[#cdb3b4]" },
  green: { block: "bg-[#40dc2c] text-[#0b3a0a]", row: "bg-[#2d642b]", btn: "border-[#193c18] bg-[#386e37]", txt: "text-[#b4ccb3]" },
  gray: { block: "bg-[#737577] text-[#14291a]", row: "bg-[#3f4346]", btn: "border-[#202225] bg-[#494b4f]", txt: "text-[#bfc0c2]" },
  dark: { block: "bg-[#b12b2d] text-[#2f0809]", row: "bg-[#55282b]", btn: "border-[#2c1415] bg-[#5e3336]", txt: "text-[#c6b0b2]" },
};

type Track = { id: number; name: string; tone: Tone; kind: "midi" | "audio"; sel?: boolean; solo?: boolean; m: [string, number, number] };
const tracks: Track[] = [
  { id: 33, name: "02_hit-snare", tone: "red", kind: "midi", m: ["#1a6fe0", 16, 16] },
  { id: 34, name: "Snare", tone: "red", kind: "midi", m: ["#1a6fe0", 19, 16] },
  { id: 35, name: "HAts", tone: "red", kind: "audio", sel: true, m: ["#1a8ae8", 16, 15] },
  { id: 36, name: "Audio Samples used no...d.", tone: "green", kind: "audio", sel: true, solo: true, m: ["#e0301a", 1, 1] },
  { id: 37, name: "03 Kick 2-01", tone: "green", kind: "audio", sel: true, solo: true, m: ["#24c424", 4, 4] },
  { id: 38, name: "1200 Miles Away.nksn", tone: "red", kind: "audio", sel: true, m: ["#1a8ae8", 16, 16] },
  { id: 39, name: "hsk_Snap", tone: "green", kind: "audio", sel: true, m: ["#22a6e8", 14, 14] },
  { id: 40, name: "FG_MADEAUX_percussi...py", tone: "red", kind: "audio", m: ["#1a55d8", 19, 19] },
];

type Fx = { id: number; name: string; val: string; tone: Tone; mono?: boolean; group?: boolean; m: [string, number, number] };
const fx: Fx[] = [
  { id: 41, name: "FX 01-RVerb Stereo", val: "0.00", tone: "gray", m: ["#22b894", 31, 31] },
  { id: 42, name: "lx480", val: "0.00", tone: "gray", m: ["#22a6d8", 13, 12] },
  { id: 43, name: "lx480 long", val: "-3.35", tone: "gray", m: ["#1a6fe0", 17, 16] },
  { id: 44, name: "MAgic 7 reverb", val: "0.40", tone: "gray", mono: true, m: ["#22a6e8", 12, 12] },
  { id: 45, name: "H delay", val: "0.00", tone: "dark", m: ["#22c6d8", 13, 9] },
];
const bus: Fx = { id: 46, name: "Vocal bus", val: "2.17", tone: "gray", group: true, m: ["#e0401a", 3, 3] };

const MeterCol = ({ m }: { m: [string, number, number] }) => (
  <div className="relative w-[11px] shrink-0 bg-black">
    <i className="absolute left-[2px] h-px w-[3px]" style={{ top: m[1], background: m[0] }} />
    <i className="absolute left-[6px] h-px w-[3px]" style={{ top: m[2], background: m[0] }} />
  </div>
);

const MuteSolo = ({ tone, solo }: { tone: Tone; solo?: boolean }) => {
  const t = tones[tone];
  return (
    <div className={`flex h-[19px] w-[50px] shrink-0 overflow-hidden rounded-[2px] border font-['Inter',sans-serif] text-[12px] leading-4 font-bold ${t.btn} ${t.txt}`}>
      <button className={solo ? "flex-1" : "flex-1 bg-[#bfb236] text-[#2b2708]"}>M</button>
      <button className={solo ? "flex-1 bg-[#d54c34] text-[#2e0e08]" : "flex-1"}>S</button>
    </div>
  );
};

const Pair = ({ tone, a, b }: { tone: Tone; a: React.ReactNode; b: React.ReactNode }) => (
  <div className={`grid h-[19px] w-[48px] grid-cols-2 rounded-[2px] border ${tones[tone].btn}`}>
    <button className={cell}>{a}</button>
    <button className={cell}>{b}</button>
  </div>
);

const TrackRow = ({ t }: { t: Track }) => {
  const c = tones[t.tone];
  const lane = <button aria-label="Lanes" className={`${cell} h-[19px] w-[23px] rounded-[2px] border ${c.btn}`}><Icon n="lanes" c="size-[12px]" /></button>;
  const note = <button aria-label="Timebase" className={`${cell} h-[19px] w-[23px] rounded-[2px] border border-[#3d2a18] bg-[#be8e5f] text-[#2a1c0d]`}><Icon n="note" c="size-[13px]" /></button>;
  return (
    <div className="flex h-[46px] shrink-0 border-b border-black">
      <div className={`flex w-[40px] shrink-0 items-start justify-between pt-[4px] pr-1 pl-[3px] text-[11px] leading-4 ${c.block}`}>
        <Icon n={t.kind === "midi" ? "bars" : "wave"} c={t.kind === "midi" ? "ml-px size-[14px] text-black/80" : "size-[16px] text-black/85"} />
        {t.id}
      </div>
      <div className={`flex min-w-0 flex-1 ${c.row}`}>
        <i className={t.sel ? "w-[3px] bg-[#cdd4e2]" : "w-[3px]"} />
        <div className="ml-[2px] flex w-[56px] flex-col pt-[2px]">
          <MuteSolo tone={t.tone} solo={t.solo} />
          <i className="mt-1 ml-px size-[20px] rounded-[3px] border-2 border-black/15" />
        </div>
        <div className={`min-w-0 flex-1 pt-[3px] ${c.txt}`}>
          <div className="pl-[3px] text-[12px] leading-[19px] font-bold whitespace-nowrap text-[#e6e4e4]">{t.name}</div>
          <div className="mt-px flex gap-[2px] font-['Inter',sans-serif] text-[12px] leading-4 font-bold">
            <Pair tone={t.tone} a={<Icon n="dot" c="size-[13px]" />} b={<Icon n="speaker" c="size-[11px]" />} />
            <Pair tone={t.tone} a={<Icon n="e" c="size-[13px]" />} b={<Icon n={t.kind === "midi" ? "bars" : "rings"} c={t.kind === "midi" ? "size-[11px]" : "size-[14px]"} />} />
            <Pair tone={t.tone} a="R" b="W" />
            {t.kind === "midi" ? <>{lane}{note}</> : <>{note}{lane}</>}
          </div>
        </div>
      </div>
      <MeterCol m={t.m} />
    </div>
  );
};

const FxRow = ({ t }: { t: Fx }) => {
  const c = tones[t.tone];
  return (
    <div className="-ml-px flex h-[46px] shrink-0 border-b border-black">
      <div className="w-3 shrink-0 bg-[#0b0b0c]" />
      <div className={`flex w-[40px] shrink-0 items-start justify-between pt-[4px] pr-1 pl-[2px] text-[11px] leading-4 ${c.block}`}>
        {t.group ? <Icon n="group" c="ml-[2px] size-[15px]" /> : <span className="text-[14px] font-semibold">FX</span>}
        {t.id}
      </div>
      <div className={`flex min-w-0 flex-1 ${c.row}`}>
        <div className="ml-[5px] flex w-[55px] flex-col pt-[2px]">
          <MuteSolo tone={t.tone} />
          <i className="mt-1 ml-px size-[20px] rounded-[3px] border-2 border-black/15" />
        </div>
        <div className={`min-w-0 flex-1 pt-[3px] ${c.txt}`}>
          <div className="pl-1 text-[12px] leading-[19px] font-bold whitespace-nowrap text-[#e6e4e4]">{t.name}</div>
          <div className="mt-px flex gap-[2px] font-['Inter',sans-serif] text-[12px] leading-4 font-bold">
            <div className={`flex h-[19px] w-[75px] items-center rounded-[2px] border pr-1 ${c.btn}`}>
              <input aria-label={`${t.name} volume`} defaultValue={t.val} className="w-0 flex-1 bg-transparent pr-[5px] text-right font-['Noto_Sans',sans-serif] text-[10px] font-normal" />
              <Icon n="spin" c="size-[11px]" />
            </div>
            <Pair tone={t.tone} a="R" b="W" />
            <Pair tone={t.tone} a={<Icon n="e" c="size-[13px]" />} b={<Icon n={t.mono ? "ring" : "rings"} c={t.mono ? "size-[13px]" : "size-[14px]"} />} />
          </div>
        </div>
      </div>
      <MeterCol m={t.m} />
    </div>
  );
};

const FolderRow = ({ name }: { name: string }) => (
  <div className="flex h-[20px] shrink-0 border-b border-black text-[11px] leading-[19px] font-bold text-[#e2e2e2]">
    <div className="flex w-[40px] items-center bg-[#737577] pl-[3px] text-[#0c2614]"><Icon n="folder" /></div>
    <div className="flex-1 bg-[#3f4346] pl-[10px]">{name}</div>
    <div className="w-[11px] bg-black" />
  </div>
);

const TrackList = () => (
  <div className="flex w-[320px] shrink-0 flex-col">
    <div className="flex h-[19px] shrink-0 text-[#dcdcdc]">
      <div className="flex overflow-hidden rounded-[2px] border border-[#47494c] bg-[#3a3b3f]">
        <Btn n="plus" label="Add track" w="w-[24px]" ic="size-[11px]" />
        <Btn n="preset" label="Add track using preset" w="w-[24px]" c="bg-[#47484c]" />
      </div>
      <span className="ml-auto w-[63px] rounded-l-[2px] bg-[#2d2f32] pl-1 text-[10px] leading-[19px]">51 / 51</span>
      <div className="flex border border-[#3a3b3f] bg-[#141518]">
        <Btn n="house" label="Track visibility" w="w-[24px]" />
        <Btn n="list" label="Track types" w="w-[24px]" c="border-l border-[#3a3b3f]" />
      </div>
      <button aria-label="Find track" className={`${cell} mr-[3px] ml-[10px] w-[25px] rounded-[2px] border border-[#47494c] bg-[#3a3b3f]`}><Icon n="search" c="size-[14px]" /></button>
    </div>
    <div className="mt-[5px] mr-px flex h-[9px] shrink-0 border-t border-b border-t-[#707173] border-b-black">
      <i className="w-[41px] bg-[#737577]" />
      <i className="flex-1 bg-[#3f4346]" />
      <i className="w-[11px] bg-black" />
    </div>
    <div className="mt-[47px] flex h-[2px] shrink-0 justify-center bg-[#707173]"><Dashes /></div>
    <div className="mt-px flex min-h-0 flex-1 flex-col overflow-hidden px-px">
      <div className="-mt-2 flex flex-col">
        {tracks.map((t) => <TrackRow key={t.id} t={t} />)}
        <FolderRow name="Effect" />
        {fx.map((t) => <FxRow key={t.id} t={t} />)}
        <FolderRow name="Group" />
        <FxRow t={bus} />
      </div>
    </div>
    <div className="flex h-[26px] shrink-0 items-center pr-[6px] pl-[9px] text-[11px] text-[#c0c0c0]">
      -
      <Icon n="caretW" c="mr-[10px] ml-auto size-[10px] text-[#77787a]" />
      <Icon n="gear" c="size-[12px] text-[#77787a]" />
    </div>
  </div>
);

/* ---------- timeline ---------- */

const BEAT = 35.78;
const beats = Array.from({ length: 29 }, (_, i) => ({ x: Math.round(17.2 + i * BEAT), bar: i % 4 === 1, n: 12 + Math.ceil(i / 4) }));

const GridLines = () => (
  <>
    <i className="absolute inset-y-0 left-[330px] w-[152px] bg-[#2d3644]" />
    {beats.map((b) => (
      <i key={b.x} className={b.bar ? "absolute inset-y-0 w-px bg-[#7b7e82]" : "absolute inset-y-0 w-px bg-[#56595e]"} style={{ left: b.x }} />
    ))}
  </>
);

const Playhead = () => <i className="absolute inset-y-0 left-[516px] z-20 w-[4px] border-x border-white bg-black" />;

const laneLines = [37, 83, 129, 175, 221, 267, 313, 359, 379, 425, 471, 517, 563, 609, 629, 675];
const autoLines = [391, 437, 489, 529, 575, 639];
const notes = [36, 107, 178, 251, 322, 394, 465, 537, 680];
const hits = [1, 20, 39, 45, 50, 56, 73, 91, 110, 119, 128, 137, 145, 164, 182, 186, 190, 200, 218, 236, 253, 262, 271, 280, 289, 307, 325, 329, 334, 343, 361, 379, 396, 415, 433, 451, 468, 472, 477, 486, 504, 522, 540, 544, 549, 553, 558, 562, 567, 571, 576, 594, 612, 617, 623, 630, 647, 665, 683, 692, 700];

const Clip = ({ x, y, w, h = 43, color, children }: { x: number; y: number; w: number; h?: number; color: "red" | "green"; children?: React.ReactNode }) => (
  <div
    className={`absolute overflow-hidden border ${color === "red" ? "border-[#8e1216] bg-[#e63a3a] inset-ring inset-ring-[#f46a68]" : "border-[#1c8a12] bg-[#40dc2c] inset-ring inset-ring-[#7bf46a]"}`}
    style={{ left: x, top: y, width: w, height: h }}
  >
    <svg className="absolute inset-0 h-full w-full">
      {beats.filter((b) => b.x > x + 2 && b.x < x + w - 2).map((b) => (
        <path key={b.x} d={`M${b.x - x - 0.5} 1V${h - 3}`} stroke={color === "red" ? "#b81d20" : "#2ba41c"} />
      ))}
      {children}
    </svg>
  </div>
);

const noise = (i: number) => {
  const v = Math.sin(i * 12.9898) * 43758.5453;
  return v - Math.floor(v);
};

const envelope = (w: number, cy: number, amp: (x: number) => number, rough: number) => {
  const top: string[] = [];
  const bot: string[] = [];
  for (let x = 2; x < w - 3; x++) {
    const a = Math.max(0.6, amp(x) * (1 - rough * noise(x + cy)));
    top.push(`${x} ${(cy - a).toFixed(1)}`);
    bot.unshift(`${x} ${(cy + a).toFixed(1)}`);
  }
  return `M${top.concat(bot).join("L")}Z`;
};

const Wave = ({ w, amp, rough = 0, fill = "#164f10" }: { w: number; amp: (x: number) => number; rough?: number; fill?: string }) => (
  <g>
    <path d={envelope(w, 11, amp, rough)} fill={fill} stroke="#031" strokeWidth="0.600" />
    <path d={envelope(w, 31, amp, rough)} fill={fill} stroke="#031" strokeWidth="0.600" />
    <path d={`M${w * 0.3} 11H${w - 4}M${w * 0.3} 31H${w - 4}`} stroke="#050805" strokeWidth="1.600" />
  </g>
);

const Arrangement = () => (
  <div className="relative min-h-0 flex-1 overflow-hidden bg-[#3a3d42]">
    <GridLines />
    {laneLines.map((y) => <i key={y} className="absolute inset-x-0 h-px bg-[#4c5055]" style={{ top: y }} />)}
    {autoLines.map((y) => <i key={y} className="absolute inset-x-0 h-[2px] bg-[#737a82]" style={{ top: y }} />)}

    <Clip x={339} y={-4} w={720} h={41} color="red">
      {notes.map((n) => <rect key={n} x={n - 1} y="30" width="18" height="5" fill="#8e1216" />)}
    </Clip>
    <Clip x={339} y={39} w={720} color="red">
      {notes.map((n) => <rect key={n} x={n - 1} y="33" width="18" height="5" fill="#8e1216" />)}
    </Clip>
    <Clip x={339} y={85} w={720} color="red">
      {[11, 31].map((cy) => (
        <g key={cy}>
          <path d={`M1 ${cy}.5H710`} stroke="#150304" />
          {hits.map((h) => (
            <path key={h} d={`M${h} ${cy - 2.5}l1-.5 2 2.500 4 .5v1l-4 .5-2 2.500-1-.5z`} fill="#5a0a0d" stroke="#1c0304" strokeWidth="0.600" />
          ))}
        </g>
      ))}
      <path d="M13 35.500 22 29v6.500zM586 35.500l10-6.500v6.500z" fill="#f2b9b8" />
      <path d="M572.500 0v43" stroke="#8e1216" />
      <path d="M571.500 1v41M573.500 1v41" stroke="#f46a68" />
    </Clip>

    <Clip x={106} y={131} w={89} color="green">
      <Wave w={89} amp={(x) => (x < 46 ? 9 * Math.pow(1 - x / 48, 1.3) : 0)} rough={0.1} />
      <path d="M12 26h10v10H12z" fill="#2ba41c" />
      <path d="M14 35.500 22 30v5.500z" fill="#0a3506" />
    </Clip>
    <Clip x={339} y={131} w={144} color="green">
      <Wave w={144} amp={(x) => (x < 42 ? 10.3 : x < 114 ? 9.5 * Math.pow(1 - (x - 42) / 74, 1.05) : 0)} rough={0.22} />
      <path d="M13 23h10v16H13z" fill="#2ba41c" />
      <path d="M14 35.500 23 29v6.500z" fill="#0a3506" />
    </Clip>
    <Clip x={518} y={131} w={23} color="green">
      <Wave w={23} amp={(x) => (x < 11 ? 10 - x * 0.9 : 0)} />
    </Clip>
    <Clip x={529} y={177} w={23} color="green">
      <path d="M1 11.500h19M1 31.500h19" stroke="#050805" strokeWidth="2" />
      <path d="M10.500 2v38" stroke="#9df08f" />
      <path d="M2 40 10 2" stroke="#e4f9e0" strokeWidth="2" />
    </Clip>
    <Clip x={983} y={269} w={56} color="green">
      <Wave w={56} amp={(x) => (x < 7 ? 10 * Math.sqrt(1 - x / 7) : 0)} />
      <path d="M5 11h12M5 31h12" stroke="#050805" strokeWidth="1.600" />
    </Clip>
    {[411, 554, 697].map((x) => (
      <Clip key={x} x={x} y={315} w={26} color="red">
        <path d="M1.500 1.500h1V7l1.500 2v4l-1.500 2v5h-1zM1.500 21.500h1V27l1.500 2v4l-1.500 2v5h-1z" fill="#3d0507" />
        <path d="M2 11h20M2 31h20" stroke="#050101" strokeWidth="1.800" />
      </Clip>
    ))}
    <Playhead />
  </div>
);

const Timeline = () => (
  <div className="flex min-w-0 flex-1 flex-col">
    <div className="relative h-[25px] shrink-0 overflow-hidden bg-[#1b1c20] text-[12px] leading-5 font-bold text-[#ececec]">
      <i className="absolute inset-y-0 left-[330px] w-[152px] bg-[#735de2]" />
      <svg className="absolute top-0 left-[330px] h-[9px] w-[153px]" viewBox="0 0 153 9"><path d="M0 0h9L0 9zM144 0h9v9z" fill="#fff" /></svg>
      {beats.map((b) => (
        <React.Fragment key={b.x}>
          <i className={b.bar ? "absolute top-0 h-6 w-px bg-white" : "absolute top-0 h-[9px] w-px bg-[#b4b4b8]"} style={{ left: b.x }} />
          {b.bar && <span className="absolute top-[7px]" style={{ left: b.x + 5 }}>{b.n}</span>}
        </React.Fragment>
      ))}
      <Playhead />
    </div>
    <div className="relative h-[54px] shrink-0 overflow-hidden bg-[#3a3d42]">
      <GridLines />
      <i className="absolute inset-x-0 top-[7px] h-px bg-[#4c5055]" />
      <Playhead />
    </div>
    <div className="flex h-1 shrink-0 items-center bg-[#25282b]">
      <div className="flex h-[2px] flex-1 bg-[#707173] pl-[514px]"><Dashes /></div>
    </div>
    <Arrangement />
    <div className="flex h-3 shrink-0 gap-[3px] text-[#e2e2e2]">
      <div className="flex flex-1 items-center bg-[#444548] px-[3px]">
        <button aria-label="Scroll left"><Icon n="left" c="size-[8px]" /></button>
        <i className="ml-[49px] h-2 w-[28px] rounded-[2px] bg-[#f2f2f2]" />
        <button aria-label="Scroll right" className="ml-auto"><Icon n="right" c="size-[8px]" /></button>
      </div>
      <button aria-label="Zoom presets" className={`${cell} w-3 bg-[#444548]`}><Icon n="caret" c="size-[7px]" /></button>
      <div className="flex w-[84px] items-center gap-1 bg-[#444548] px-[3px]">
        <Icon n="minus" c="size-[8px]" />
        <input type="range" aria-label="Horizontal zoom" className="h-[2px] w-0 flex-1 appearance-none bg-[#77787a] [&::-webkit-slider-thumb]:size-2 [&::-webkit-slider-thumb]:appearance-none [&::-webkit-slider-thumb]:rounded-full [&::-webkit-slider-thumb]:bg-white" />
        <Icon n="plusS" c="size-[8px]" />
      </div>
    </div>
  </div>
);

const VScroll = () => (
  <div className="flex w-[12px] shrink-0 flex-col text-[#e2e2e2]">
    <button aria-label="Ruler options" className={`${cell} h-[21px] rounded-[2px] border border-[#47494c] bg-[#303134]`}><Icon n="caret" c="size-[8px]" /></button>
    <div className="mt-1 flex h-[53px] flex-col items-center justify-between rounded-[2px] bg-[#444548] py-[3px]">
      <Icon n="up" c="size-[8px]" />
      <Icon n="down" c="size-[8px]" />
    </div>
    <i className="my-[2px] h-[2px] bg-[#707173]" />
    <button aria-label="Draw" className={`${cell} h-[12px] bg-[#444548]`}><Icon n="pencil" c="size-[8px]" /></button>
    <div className="mt-[3px] flex h-[48px] shrink-0 flex-col items-center bg-[#444548] pt-[5px]">
      <i className="h-[33px] w-[2px] bg-[#77787a]" />
      <i className="size-2 rounded-full bg-white" />
    </div>
    <div className="mt-[3px] flex min-h-0 flex-1 flex-col items-center rounded-[2px] bg-[#444548] py-1">
      <Icon n="up" c="size-[8px]" />
      <i className="mt-auto h-[165px] w-2 rounded-[2px] bg-[#f2f2f2]" />
      <Icon n="down" c="mt-[6px] size-[8px]" />
    </div>
    <button aria-label="Zoom preset" className={`${cell} mt-[3px] h-3 bg-[#444548]`}><Icon n="caret" c="size-[7px]" /></button>
    <div className="mt-[3px] flex h-[84px] shrink-0 flex-col items-center bg-[#444548] py-[3px]">
      <Icon n="minus" c="size-[8px]" />
      <i className="mt-[6px] size-2 rounded-full bg-white" />
      <i className="w-[2px] flex-1 bg-[#77787a]" />
      <Icon n="plusS" c="mt-[5px] size-[8px]" />
    </div>
    <div className="h-[12px] shrink-0" />
  </div>
);

/* ---------- right zone ---------- */

const plugins = [
  ["kHs Gain", "border-[#234f7c] bg-[#2c639d]"],
  ["SuperVision", "border-[#234f7c] bg-[#2c639d]"],
  ["SPAN Plus", "border-[#8c4d29] bg-[#b46331]"],
  ["SoundID Reference Plugin", "border-[#8c4d29] bg-[#b46331]"],
];
const crMarks: [string, string][] = [["50", "left-[6px]"], ["40", "left-[26px]"], ["30", "left-[56px]"], ["24", "left-[79px]"], ["18", "left-[105px]"], ["12", "left-[131px]"], ["6", "left-[161px]"], ["0", "left-[187px]"]];

const ControlRoom = () => (
  <section className="ml-1 flex w-[224px] shrink-0 flex-col">
    <div className="z-10 -mb-[2px] flex h-[24px] shrink-0 text-[12px] leading-[23px] font-bold text-[#d6d6d6]">
      <button className="w-[54px]">VSTi</button>
      <button className="w-[64px]">Media</button>
      <button className="h-[24px] w-[50px] rounded-t-[4px] border-2 border-b-0 border-white bg-[#25282b] leading-5 text-white">CR</button>
      <button className="pl-[14px]">Meter</button>
    </div>
    <div className="flex min-h-0 flex-1 flex-col rounded-l-[6px] border-y-2 border-l-2 border-white bg-[#25282b] pt-[11px] pr-[6px] pb-[15px] pl-[10px]">
      <Header title="Monitors"><span className="flex items-center pr-[3px]"><Icon n="monitor" c="size-[11px]" /></span></Header>
      <div className="mx-px mt-2 h-[19px] shrink-0 rounded-[2px] border border-[#131416] bg-[#232427]" />
      <i className="mx-px mt-[10px] h-px shrink-0 bg-[#494c4f]" />
      <div className="relative mx-[2px] mt-2 h-[18px] shrink-0 rounded-[4px] border-2 border-[#17181a] bg-[#1d1e20] text-[8px] leading-[14px] font-bold text-[#505255]">
        {crMarks.map(([t, c]) => <span key={t} className={`absolute ${c}`}>{t}</span>)}
      </div>
      <div className={`${field} mx-px mt-[6px] h-[25px] rounded-[3px] border pr-[5px] text-[12px] text-[#d0d0d0]`}>
        <Btn n="osc" label="Talkback level" w="w-[24px]" ic="size-5" c="h-full border-r border-[#47494c] bg-[#3d3e42]" />
        <input type="range" aria-label="Monitor level" className="ml-[9px] h-[5px] w-[112px] appearance-none rounded-[2px] bg-[linear-gradient(90deg,#5ab2f5_50%,#323336_50%)] [&::-webkit-slider-thumb]:size-[9px] [&::-webkit-slider-thumb]:appearance-none [&::-webkit-slider-thumb]:rounded-full [&::-webkit-slider-thumb]:bg-[#d0d0d0]" />
        <span className="ml-auto">0.0dB</span>
      </div>
      <div className="flex-1" />
      <Header title="Main">
        <span className="flex items-center pr-1 text-[10px]">stereo-&gt;mono</span>
        <button aria-label="Downmix" className={`${cell} w-[18px] border-l border-[#77787a] text-[#5ab2f5]`}><Icon n="stereo" /></button>
      </Header>
      <div className="mx-px mt-2 h-[7px] shrink-0 border border-b-0 border-[#47494c] p-[2px]"><i className="block h-[2px] bg-[#3a3b3e]" /></div>
      <button className="mx-px h-[19px] shrink-0 bg-[#f19937] text-[10px] leading-[19px] text-[#4d2c08]">Mix</button>
      <div className="mx-px mt-[6px] flex h-[103px] shrink-0 justify-between text-[#dadada]">
        <div className="grid w-[53px] grid-cols-2 content-start gap-x-[3px] gap-y-[10px] pt-1 text-[12px]">
          <button aria-label="Metronome" className={`${cell} h-[25px] rounded-[2px] bg-[#d2d2d2] text-[#2a2a2c]`}><Icon n="metro" /></button>
          <button className="h-[25px] rounded-[2px] bg-[#d2d2d2] font-['Inter',sans-serif] text-[18px] leading-6 font-bold text-[#2a2a2c]">L</button>
          <button aria-label="Reference level" className={`${cell} col-span-2 h-[25px] rounded-[2px] border border-[#4b4d50] bg-[#3d3e42]`}><Icon n="mixvol" /></button>
          <button className="col-span-2 h-[25px] rounded-[2px] border border-[#4b4d50] bg-[#3d3e42]">Dim</button>
        </div>
        <div className="flex flex-col items-center pt-[6px] pr-[7px]">
          <svg viewBox="0 0 66 66" className="size-[66px]" role="img" aria-label="Control room level">
            <circle cx="33" cy="34" r="32" fill="#141416" />
            <path d="M13.300 54.200A28.500 28.500 0 1 1 54.200 53" fill="none" stroke="#3b3c40" strokeWidth="5" />
            <path d="M13.300 54.200A28.500 28.500 0 1 1 58.500 21.500" fill="none" stroke="#f8403f" strokeWidth="5" />
            <circle cx="33" cy="34" r="22" fill="#4d3b3e" stroke="#e8403f" strokeWidth="1.500" />
            <path d="M38.500 31.500 47.500 27.500" stroke="#d6d6d6" strokeWidth="4.500" strokeLinecap="round" />
          </svg>
          <div className="mt-[7px] flex h-[19px] w-[50px] items-center rounded-[2px] border border-[#47494c] bg-[#131416] pr-[2px] text-[10px]">
            <input aria-label="Level" defaultValue="-1.03" className="w-0 flex-1 bg-transparent pr-1 text-right" />
            <Icon n="spin" c="size-[13px]" />
          </div>
        </div>
        <svg viewBox="0 0 37 103" className="w-[37px]">
          <rect x="1" y="1" width="35" height="101" rx="4" fill="#1d1e20" stroke="#17181a" strokeWidth="2" />
          <path d="M3 9.500h31" stroke="#e03020" />
          {([[14, "0"], [36, "12"], [58, "24"], [80, "40"]] as [number, string][]).map(([y, t]) => (
            <g key={y}>
              <path d={`M3 ${y + 0.5}h${t === "0" ? 9 : 6}M${t === "0" ? 26 : 28} ${y + 0.5}h${t === "0" ? 8 : 6}`} stroke="#505255" />
              <text x="19" y={y + 3} textAnchor="middle" className="fill-[#4d4f52] text-[8px] font-bold">{t}</text>
            </g>
          ))}
        </svg>
      </div>
      <div className="mx-px mt-[6px] flex h-[19px] shrink-0 gap-[3px] text-[10px] leading-[17px]">
        <button className="w-[76px] bg-[#d2d2d2] text-[#2a2a2c]">A</button>
        <button className="flex flex-1 rounded-[2px] border border-[#47494c] bg-[#3a3b3f] pl-2 text-[#dadada]"><span>2</span><span className="flex-1 pr-1 pl-[16px] text-center">Mono</span></button>
      </div>
      <div className="mx-px mt-[5px] flex flex-col gap-[6px]">
        {[0, 1, 2, 3].map((i) => <button key={i} aria-label={`Insert ${i + 1}`} className="h-[19px] rounded-[2px] border border-[#131416] bg-[#232427]" />)}
      </div>
      <div className="mx-px mt-[6px] flex flex-col gap-[5px]">
        {plugins.map(([n, c]) => <button key={n} className={`h-[20px] rounded-[2px] border pl-[3px] text-left text-[13px] leading-5 text-[#dbe0e6] ${c}`}>{n}</button>)}
      </div>
    </div>
    <div className="z-10 -mt-[2px] flex h-[23px] shrink-0 text-[12px] leading-6 font-bold">
      <button className="w-[68px] text-[#d6d6d6]">Main</button>
      <button className="w-[80px] rounded-b-[3px] border-2 border-t-0 border-white bg-[#25282b] pt-[2px] text-white">Inserts</button>
    </div>
  </section>
);

/* ---------- transport ---------- */

const tbox = "flex h-[27px] shrink-0 rounded-[3px] border border-[#47494c]";
const Pos = ({ icon, label, v, w, dim }: { icon: string; label: string; v: string; w: string; dim?: boolean }) => (
  <div className={`${tbox} ${w} bg-[#141518]`}>
    <Btn n={icon} label={label} w="w-[24px]" ic="size-[14px]" c="bg-[#3a3b3f]" />
    <input aria-label={`${label} position`} defaultValue={v} className={dim ? "w-0 flex-1 bg-transparent pr-[6px] text-right text-[#66676a]" : "w-0 flex-1 bg-transparent pr-[6px] text-right"} />
  </div>
);
const Drop = ({ n, label }: { n: string; label: string }) => (
  <button aria-label={label} className={`${tbox} w-[44px] items-center justify-center gap-[8px] bg-[#141518]`}>
    <Icon n={n} c="size-[17px]" />
    <Icon n="caret" c="size-[9px]" />
  </button>
);

const Transport = () => (
  <footer className="flex h-[26px] shrink-0 items-start overflow-hidden bg-[#25282b] pt-[6px] pl-1 font-['Open_Sans',sans-serif] text-[14px] leading-5 text-[#d8d8d8]">
    <div className={`${tbox} bg-[#3a3b3f]`}><Btn n="clock" label="Constrain delay" w="w-[23px]" /></div>
    <div className="w-[5px]" />
    <Drop n="dot" label="Record mode" /><Dots />
    <div className="w-[2px]" /><Drop n="wave" label="Audio record mode" /><Dots />
    <div className="w-[2px]" /><Drop n="midi" label="MIDI record mode" /><Dots />
    <button className={`${tbox} ml-[2px] w-[38px] items-center justify-center bg-[#3a3b3f]`}>AQ</button>
    <div className="ml-[87px] flex gap-[10px]">
      <Pos icon="flagL" label="Left locator" v="14.  4.  4.    0" w="w-[150px]" />
      <Pos icon="flagR" label="Right locator" v="16.  1.  1.    0" w="w-[150px]" />
    </div>
    <div className="-mt-[2px] ml-[6px] flex h-[32px] w-[200px] shrink-0 rounded-[3px] border-2 border-[#a9adb0] bg-[#5d5e61]">
      <Btn n="cycle" label="Cycle" w="w-[49px]" c="bg-[#8873e2] text-[#17122c]" />
      <Btn n="stop" label="Stop" w="w-[50px]" c="bg-[#a3a8ac] text-[#1e1f21]" />
      <Btn n="play" label="Play" w="w-[49px]" />
      <Btn n="rec" label="Record" w="flex-1" />
    </div>
    <Dots />
    <div className={`${tbox} ml-px mr-[5px] w-[38px] bg-[#3a3b3f]`}><Btn n="punch" label="Punch in" w="w-full" /></div>
    <Pos icon="note" label="Primary time" v="16.  2.  1.    0" w="w-[150px]" /><Dots />
    <div className="ml-[2px] flex gap-[10px]">
      <Pos icon="pre" label="Pre-roll" v="1.  0.  0.    0" w="w-[125px]" dim />
      <Pos icon="post" label="Post-roll" v="0.    0" w="w-[125px]" dim />
    </div>
    <Dots />
    <div className={`${tbox} ml-[2px] w-[232px] bg-[#141518] text-[13px]`}>
      <Btn n="tempo" label="Tempo track" w="w-[24px]" c="bg-[#3a3b3f]" />
      <input aria-label="Tempo" defaultValue="101.000" className="w-0 flex-1 bg-transparent pl-[9px]" />
      <Icon n="spin" c="mt-[7px] mr-[6px] size-3" />
      <button className="w-[50px] border-l border-[#47494c]">4/4</button>
      <button className="w-[50px] bg-[#3a3b3f]">Tap</button>
      <Btn n="caret" label="Tempo menu" ic="size-[9px]" />
    </div>
    <Dots />
    <div className={`${tbox} ml-auto w-[69px] bg-[#3a3b3f]`}>
      <Btn n="metro" label="Metronome" w="w-[24px]" />
      <Btn n="precount" label="Precount" w="w-[23px]" ic="size-[13px]" />
      <Btn n="gear" label="Click setup" w="w-[20px]" ic="size-[13px]" />
    </div>
    <Dots />
    <div className={`${tbox} ml-[2px] w-[102px] bg-[#0f1011]`}>
      <i className="ml-[24px] w-px bg-[#47494c]" />
      <i className="ml-1 w-1 bg-[#f40d0d]" />
      <i className="ml-1 h-px w-[17px] bg-[#1bb31b]" />
      <i className="ml-[5px] h-px w-[15px] bg-[#d83018]" />
      <i className="ml-[5px] w-1 bg-[#f40d0d]" />
      <Btn n="caretL" label="Output level" w="flex-1" ic="size-[9px]" />
    </div>
    <Dots />
    <div className="ml-[3px] flex h-[27px] shrink-0">
      <Btn n="locked" label="Lock" c="rounded-[2px] bg-[#d2d2d2] text-[#222]" />
      <Btn n="mute1" label="Marker down" c="bg-[#3a3b3f]" />
      <Btn n="mute2" label="Marker up" c="bg-[#3a3b3f]" />
    </div>
  </footer>
);

/* ---------- app ---------- */

export default function App() {
  return (
    <div className="flex h-screen flex-col overflow-hidden bg-[#070707] font-['Noto_Sans',sans-serif]">
      <TitleBar />
      <MenuBar />
      <div className="shrink-0 overflow-hidden bg-[#25292c]">
        <Toolbar />
        <StatusLine />
      </div>
      <div className="h-[40px] shrink-0 bg-[#191a1c] pl-4 text-center text-[11px] leading-[41px] font-bold text-[#b4b4b4]">No Object Selected</div>
      <main className="flex min-h-0 flex-1 pt-1 pb-1 pl-[5px]">
        <Channel />
        <Inspector />
        <section className="ml-1 flex min-w-0 flex-1 rounded-[6px] border-2 border-[#5c5d62] bg-[#25282b] pt-1 pr-1 pb-1 pl-1">
          <TrackList />
          <div className="mr-px flex w-[2px] shrink-0 items-center bg-[#707173]">
            <span className="flex h-6 w-[2px] flex-col gap-[2px] bg-[#111]">
              {[0, 1, 2, 3].map((i) => <i key={i} className="h-1 bg-[#ececec]" />)}
            </span>
          </div>
          <Timeline />
          <VScroll />
        </section>
        <ControlRoom />
      </main>
      <Transport />
    </div>
  );
}
